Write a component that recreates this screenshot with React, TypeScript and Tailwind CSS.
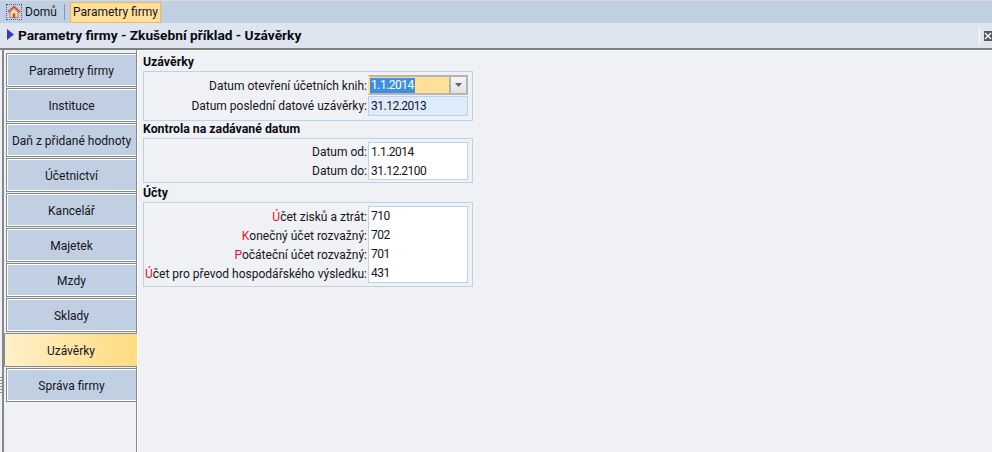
import React from "react";

const tabs = [
  "Parametry firmy",
  "Instituce",
  "Daň z přidané hodnoty",
  "Účetnictví",
  "Kancelář",
  "Majetek",
  "Mzdy",
  "Sklady",
  "Uzávěrky",
  "Správa firmy",
];

const Label = ({ first, rest }: { first?: string; rest: string }) => (
  <div className="h-[19px] flex items-center justify-end pr-[1px] text-[#14141e] leading-none whitespace-nowrap">
    {first && <span className="text-[#e8102c]">{first}</span>}
    {rest}
  </div>
);

const Value = ({ text }: { text: string }) => (
  <div className="h-[19px] pb-[2px] flex items-center pl-[2px] text-[#14141e] leading-none tracking-[-0.5px]">{text}</div>
);

const App = () => {
  return (
    <div className="w-[992px] h-[452px] overflow-hidden flex flex-col bg-[#eff1f4] text-[12px] font-['Roboto','Noto_Sans',sans-serif]">
      <div className="h-[23px] bg-[#bfd0e2] flex items-center pl-[6px] border-t border-[#d5d8dc]">
        <div className="w-[16px] h-[16px] border border-dotted border-[#5a5aa0] flex items-center justify-center">
          <svg width="14" height="14" viewBox="0 0 14 14">
            <path d="M3 7 7 3.4 11 7V12.5H3Z" fill="#f3d9b4" stroke="#b5703c" strokeWidth="0.8" />
            <path d="M1 7 7 1.5 13 7" fill="none" stroke="#d0492c" strokeWidth="1.6" />
            <rect x="5.8" y="8.5" width="2.4" height="4" fill="#c8442c" />
          </svg>
        </div>
        <span className="ml-[3px] w-[33px] text-[#14141e] leading-none">Domů</span>
        <div className="w-px h-[16px] bg-[#8a97a6] ml-[6px] mr-[5px]" />
        <div className="h-[21px] w-[91px] flex items-center justify-center bg-[#ffdf9a] border border-[#f5b75a] text-[#14141e] leading-none">
          Parametry firmy
        </div>
      </div>

      <div className="h-[25px] bg-[#dfe5ee] flex items-center">
        <svg className="ml-[7px] mb-[2px]" width="7" height="11" viewBox="0 0 7 11">
          <path d="M0 0 7 5.5 0 11Z" fill="#3a3ab4" />
        </svg>
        <span className="ml-[4px] text-[13.7px] font-bold text-[#0a0a14] leading-none">
          Parametry firmy - Zkušební příklad - Uzávěrky
        </span>
        <div className="ml-auto w-px h-[16px] bg-white mr-[4px]" />
        <svg width="8" height="10" viewBox="0 0 8 10">
          <rect width="8" height="10" fill="#55585c" />
          <path d="M1 2 7 8M7 2 1 8" stroke="#fff" strokeWidth="1.4" />
        </svg>
      </div>

      <div className="h-[2px] bg-[#7d8288]" />

      <div className="flex-1 flex min-h-0">
        <div className="w-[2px] shrink-0 pt-[327px] flex flex-col gap-[2px]">
          {[0, 1, 2, 3, 4, 5].map((dot) => (
            <div key={dot} className="h-px w-[2px] bg-[#8c9096]" />
          ))}
        </div>

        <div className="w-[135px] border-l-2 border-r border-[#85898e] pt-[3px] flex flex-col gap-px shrink-0">
          {tabs.map((tab) => {
            const active = tab === "Uzávěrky";
            return (
              <div
                key={tab}
                className={
                  active
                    ? "h-[34px] pt-px -mr-px flex items-center justify-center rounded-l-[2px] border border-r-0 border-[#85898e] bg-gradient-to-r from-[#fff0c8] to-[#ffdb80] text-[#14141e]"
                    : "h-[34px] pt-px ml-[2px] flex items-center justify-center border border-r-0 border-[#85898e] shadow-[inset_1px_1px_0_#fff,inset_0_-1px_0_#fff] bg-[#c0d0e2] text-[#14141e]"
                }
              >
                {tab}
              </div>
            );
          })}
        </div>

        <div className="flex-1 pl-[5px] pt-[3px] border-l border-t border-white">
          <div className="w-[330px]">
            <div className="h-[17px] text-[12.3px] font-bold leading-[17px] text-[#0a0a14]">Uzávěrky</div>
            <div className="h-[50px] border border-[#bcd2e8] flex pt-[3px] pl-[2px]">
              <div className="w-[222px] pt-[1px] flex flex-col gap-[1px]">
                <Label rest="Datum otevření účetních knih:" />
                <Label rest="Datum poslední datové uzávěrky:" />
              </div>
              <div className="w-[100px] flex flex-col">
                <div className="h-[20px] flex bg-[#ffdf9a] border-2 border-r-[#b5b5b5] border-t-[#b5b5b5] border-b-[#b5b5b5] border-l-[#ffdf9a]">
                  <div className="flex-1 flex items-center">
                    <span className="bg-[#3f8fe0] text-white leading-[15px] px-px tracking-[-0.5px]">1.1.2014</span>
                  </div>
                  <div className="w-[17px] bg-gradient-to-b from-[#f6f6f6] to-[#e2e2e2] border-l-2 border-[#b5b5b5] flex items-center justify-center">
                    <svg width="7" height="4" viewBox="0 0 7 4">
                      <path d="M0 0H7L3.5 4Z" fill="#666" />
                    </svg>
                  </div>
                </div>
                <div className="h-[20px] mt-px bg-[#ddecfd] border border-[#bcd2e8]">
                  <Value text="31.12.2013" />
                </div>
              </div>
            </div>

            <div className="h-[17px] text-[12.3px] font-bold leading-[17px] text-[#0a0a14]">Kontrola na zadávané datum</div>
            <div className="h-[45px] border border-[#bcd2e8] flex pt-[3px] pl-[2px]">
              <div className="w-[222px]">
                <Label rest="Datum od:" />
                <Label rest="Datum do:" />
              </div>
              <div className="w-[100px] h-[38px] bg-white border border-[#bcd2e8]">
                <Value text="1.1.2014" />
                <Value text="31.12.2100" />
              </div>
            </div>

            <div className="h-[17px] mt-[2px] text-[12.3px] font-bold leading-[17px] text-[#0a0a14]">Účty</div>
            <div className="h-[85px] border border-[#bcd2e8] flex pt-[3px] pl-[2px]">
              <div className="w-[222px] pt-[1px]">
                <Label first="Ú" rest="čet zisků a ztrát:" />
                <Label first="K" rest="onečný účet rozvažný:" />
                <Label first="P" rest="očáteční účet rozvažný:" />
                <Label first="Ú" rest="čet pro převod hospodářského výsledku:" />
              </div>
              <div className="w-[100px] h-[77px] bg-white border border-[#bcd2e8]">
                <Value text="710" />
                <Value text="702" />
                <Value text="701" />
                <Value text="431" />
              </div>
            </div>
          </div>
        </div>
      </div>
    </div>
  );
};

export default App;
